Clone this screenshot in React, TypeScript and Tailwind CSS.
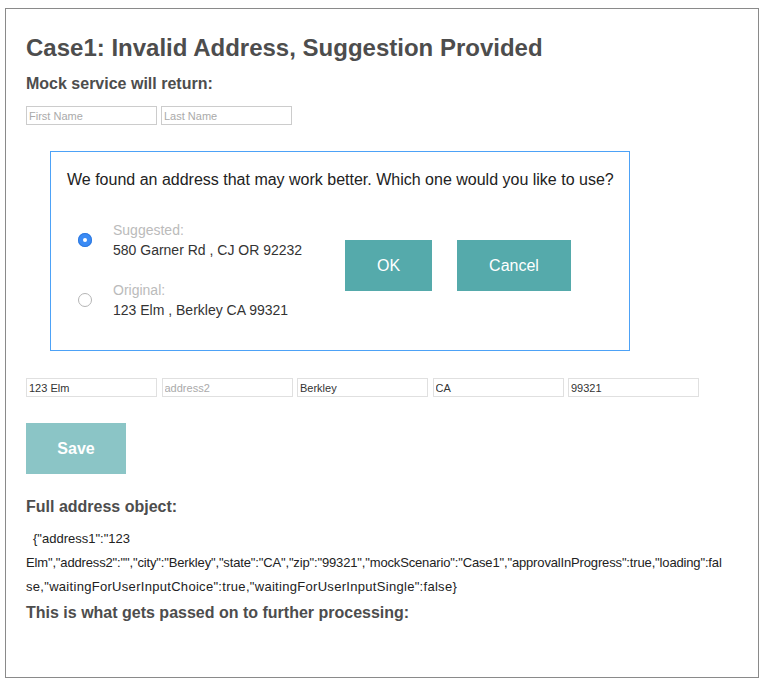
import React from "react";

const font = { fontFamily: '"Liberation Sans", Arial, Helvetica, sans-serif' };

function Radio({ checked }: { checked: boolean }) {
  if (checked) {
    return (
      <span className="flex h-[14px] w-[14px] items-center justify-center rounded-full bg-[#3b8bf5] shadow-[inset_0_0_0_1px_#2f7ae0]">
        <span className="h-[4px] w-[4px] rounded-full bg-white" />
      </span>
    );
  }
  return <span className="block h-[14px] w-[14px] rounded-full border border-[#b5b5b5] bg-white" />;
}

export default function App() {
  const inputCls =
    "h-[19px] w-[131px] border border-[#e0e0e0] bg-white px-[2px] text-[11px] leading-[17px] text-[#333] outline-none placeholder:text-[#aaa]";
  const nameCls =
    "h-[19px] w-[131px] border border-[#cccccc] bg-white px-[2px] text-[11px] leading-[17px] text-[#333] outline-none placeholder:text-[#aaa]";
  return (
    <div className="bg-white" style={font}>
      <div className="ml-[5px] mt-[8px] h-[670px] w-[754px] border border-[#8a8a8a] pl-[20px] pt-[25px]">
        <h1 className="text-[24px] font-bold leading-[28px] text-[#4d4d4d]">
          Case1: Invalid Address, Suggestion Provided
        </h1>
        <h2 className="mt-[12px] text-[16px] font-bold leading-[20px] text-[#4d4d4d]">
          Mock service will return:
        </h2>
        <div className="mt-[12px] flex gap-[4px]">
          <input className={nameCls} placeholder="First Name" readOnly />
          <input className={nameCls} placeholder="Last Name" readOnly />
        </div>

        <div className="ml-[24px] mt-[26px] h-[200px] w-[580px] border border-[#4da2f7] px-[16px] pt-[18px]">
          <p className="whitespace-nowrap text-[16px] leading-[20px] text-[#222]">
            We found an address that may work better. Which one would you like to use?
          </p>
          <div className="mt-[30px] flex">
            <div className="flex w-[278px] flex-col gap-[20px]">
              <div className="flex items-center">
                <span className="ml-[11px] mr-[21px]">
                  <Radio checked />
                </span>
                <div className="text-[14px] leading-[20px]">
                  <div className="text-[#bbbbbb]">Suggested:</div>
                  <div className="text-[#333]">580 Garner Rd , CJ OR 92232</div>
                </div>
              </div>
              <div className="flex items-center">
                <span className="ml-[11px] mr-[21px]">
                  <Radio checked={false} />
                </span>
                <div className="text-[14px] leading-[20px]">
                  <div className="text-[#bbbbbb]">Original:</div>
                  <div className="text-[#333]">123 Elm , Berkley CA 99321</div>
                </div>
              </div>
            </div>
            <div className="mt-[20px] flex gap-[25px]">
              <button className="h-[51px] w-[87px] bg-[#55aaab] text-[16px] text-white">OK</button>
              <button className="h-[51px] w-[114px] bg-[#55aaab] text-[16px] text-white">Cancel</button>
            </div>
          </div>
        </div>

        <div className="mt-[27px] flex gap-[4.5px]">
          <input className={inputCls} defaultValue="123 Elm" readOnly />
          <input className={inputCls} placeholder="address2" readOnly />
          <input className={inputCls} defaultValue="Berkley" readOnly />
          <input className={inputCls} defaultValue="CA" readOnly />
          <input className={inputCls} defaultValue="99321" readOnly />
        </div>

        <button className="mt-[26px] block h-[51px] w-[100px] bg-[#8bc5c6] text-[16px] font-bold text-white">
          Save
        </button>

        <h3 className="mt-[23px] text-[16px] font-bold leading-[20px] text-[#4d4d4d]">
          Full address object:
        </h3>
        <div className="mt-[10px] text-[13px] leading-[24px] text-[#222]">
          <div className="whitespace-nowrap pl-[7px]">{'{"address1":"123'}</div>
          <div className="whitespace-nowrap tracking-[-0.15px]">
            {'Elm","address2":"","city":"Berkley","state":"CA","zip":"99321","mockScenario":"Case1","approvalInProgress":true,"loading":fal'}
          </div>
          <div className="whitespace-nowrap tracking-[0.3px]">
            {'se,"waitingForUserInputChoice":true,"waitingForUserInputSingle":false}'}
          </div>
        </div>
        <h3 className="mt-[4px] text-[16px] font-bold leading-[20px] text-[#4d4d4d]">
          This is what gets passed on to further processing:
        </h3>
      </div>
    </div>
  );
}
